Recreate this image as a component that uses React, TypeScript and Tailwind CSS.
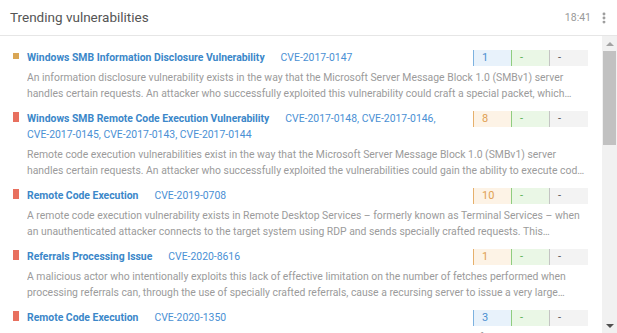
import { EllipsisVertical } from "lucide-react"

type Item = {
  title: string
  cves: string[]
  desc: string
  severity: "medium" | "high"
  count: string
  tone: "blue" | "orange"
}

const items: Item[] = [
  {
    title: "Windows SMB Information Disclosure Vulnerability",
    cves: ["CVE-2017-0147"],
    desc: "An information disclosure vulnerability exists in the way that the Microsoft Server Message Block 1.0 (SMBv1) server handles certain requests. An attacker who successfully exploited this vulnerability could craft a special packet, which could lead to information disclosure from the server.",
    severity: "medium",
    count: "1",
    tone: "blue",
  },
  {
    title: "Windows SMB Remote Code Execution Vulnerability",
    cves: ["CVE-2017-0148", "CVE-2017-0146", "CVE-2017-0145", "CVE-2017-0143", "CVE-2017-0144"],
    desc: "Remote code execution vulnerabilities exist in the way that the Microsoft Server Message Block 1.0 (SMBv1) server handles certain requests. An attacker who successfully exploited the vulnerabilities could gain the ability to execute code on the target server.",
    severity: "high",
    count: "8",
    tone: "orange",
  },
  {
    title: "Remote Code Execution",
    cves: ["CVE-2019-0708"],
    desc: "A remote code execution vulnerability exists in Remote Desktop Services – formerly known as Terminal Services – when an unauthenticated attacker connects to the target system using RDP and sends specially crafted requests. This vulnerability is pre-authentication and requires no user interaction.",
    severity: "high",
    count: "10",
    tone: "orange",
  },
  {
    title: "Referrals Processing Issue",
    cves: ["CVE-2020-8616"],
    desc: "A malicious actor who intentionally exploits this lack of effective limitation on the number of fetches performed when processing referrals can, through the use of specially crafted referrals, cause a recursing server to issue a very large number of fetches in an attempt to process the referral.",
    severity: "high",
    count: "1",
    tone: "orange",
  },
  {
    title: "Remote Code Execution",
    cves: ["CVE-2020-1350"],
    desc: "A remote code execution vulnerability exists in Windows Domain Name System servers when they fail to properly handle requests.",
    severity: "high",
    count: "3",
    tone: "blue",
  },
]

function Counts({ count, tone }: { count: string; tone: "blue" | "orange" }) {
  const first =
    tone === "blue"
      ? "bg-[#e8f2fb] border-[#7db2e0] text-[#4a8fd0]"
      : "bg-[#fdf3e6] border-[#e6b06c] text-[#e0a052]"
  return (
    <div className="flex h-4 shrink-0 text-[11px] leading-4">
      <div className={`w-[38px] border-l pl-2 ${first}`}>{count}</div>
      <div className="w-[38px] border-l border-[#8fcd7f] bg-[#eaf7e6] pl-2 text-[#56b050]">-</div>
      <div className="w-[39px] border-l border-[#c4c4c4] bg-[#f3f3f3] pl-2 text-[#555]">-</div>
    </div>
  )
}

function Row({ item }: { item: Item }) {
  return (
    <div className="flex pb-[9px] pl-[13px] pr-[14px]">
      <div className="flex h-4 w-[14px] shrink-0 items-start pt-[3px]">
        {item.severity === "high" ? (
          <div className="h-[10px] w-[6px] -mt-[2px] bg-[#e8705f]" />
        ) : (
          <div className="h-[6px] w-[6px] bg-[#d9a655]" />
        )}
      </div>
      <div className="min-w-0 flex-1">
        <div className="flex items-start">
          <div className="flex-1 pr-6 text-[10.4px] leading-4">
            <span className="mr-4 font-bold text-[#3b87c9]">{item.title}</span>
            {item.cves.map((cve, i) => (
              <span key={cve} className="text-[#4a90d4]">
                <span className="whitespace-nowrap">
                  {cve}
                  {i < item.cves.length - 1 ? "," : ""}
                </span>{" "}
              </span>
            ))}
          </div>
          <Counts count={item.count} tone={item.tone} />
        </div>
        <p className="mt-[4px] line-clamp-2 text-[10.4px] leading-4 text-[#9b9b9b]">{item.desc}</p>
      </div>
    </div>
  )
}

export default function App() {
  return (
    <div className="flex h-[333px] w-[617px] flex-col overflow-hidden bg-white font-['Roboto',sans-serif]">
      <div className="flex h-9 shrink-0 items-center justify-between border-b border-[#e6e6e6] pl-[10px] pr-[6px]">
        <h2 className="text-[13.5px] text-[#555]">Trending vulnerabilities</h2>
        <div className="flex items-center gap-[6px]">
          <span className="text-[10.5px] text-[#999]">18:41</span>
          <EllipsisVertical className="h-[14px] w-[14px] text-[#999]" strokeWidth={3} />
        </div>
      </div>
      <div className="flex min-h-0 flex-1">
        <div className="min-w-0 flex-1 overflow-hidden pt-[14px]">
          {items.map((item, i) => (
            <Row key={i} item={item} />
          ))}
        </div>
        <div className="flex w-[15px] shrink-0 flex-col items-center bg-[#f1f1f1]">
          <div className="flex h-[15px] w-full items-center justify-center">
            <div className="h-0 w-0 border-x-[4px] border-b-[4px] border-x-transparent border-b-[#a3a3a3]" />
          </div>
          <div className="h-[94px] w-[13px] bg-[#c1c1c1]" />
          <div className="flex-1" />
          <div className="flex h-[15px] w-full items-center justify-center">
            <div className="h-0 w-0 border-x-[4px] border-t-[4px] border-x-transparent border-t-[#505050]" />
          </div>
        </div>
      </div>
    </div>
  )
}
